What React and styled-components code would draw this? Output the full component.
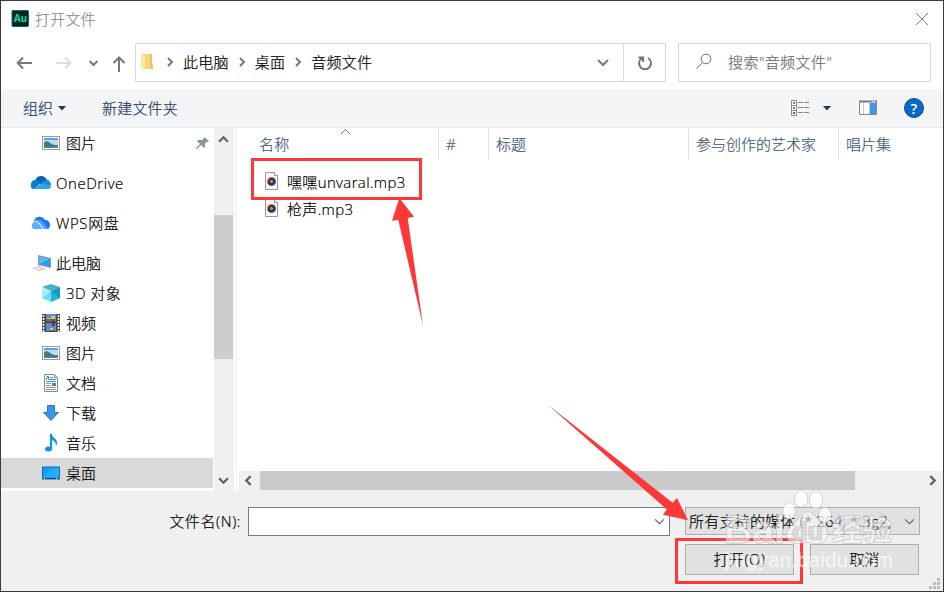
import React from "react";
import styled, { createGlobalStyle } from "styled-components";

const Global = createGlobalStyle`
  * { box-sizing: border-box; }
  body { margin: 0; background: #fff; }
  svg { display: block; flex: none; }
`;

const Window = styled.div`
  position: relative;
  width: 944px;
  height: 592px;
  display: flex;
  flex-direction: column;
  overflow: hidden;
  border: 1px solid #3a3a3c;
  background: #fff;
  color: #000;
  font-family: "Open Sans", "Noto Sans CJK SC", sans-serif;
  font-size: 15px;
  font-weight: 300;
  line-height: 20px;
  white-space: nowrap;
  -webkit-text-stroke: 0.2px;
`;

const Label = styled.span`
  display: block;
  flex: none;
  letter-spacing: ${(p) => p.$spacing || 0}px;
`;

const TitleBar = styled.header`
  height: 42px;
  padding: 9px 14px 0 10px;
  display: flex;
  align-items: flex-start;
  color: #8c8c8c;
`;

const TitleText = styled(Label)`
  margin: -1px auto 0 6px;
`;

const CloseIcon = styled.svg`
  margin-top: 2px;
`;

const NavBar = styled.nav`
  height: 39px;
  margin-bottom: 7px;
  display: flex;
`;

const NavButtons = styled.div`
  width: 134px;
  display: flex;
`;

const AddressBox = styled.div`
  width: 489px;
  display: flex;
  align-items: center;
  padding: 0 0 2px 4px;
  border: 1px solid #d9d9d9;
`;

const Crumbs = styled.div`
  display: flex;
  gap: 8px;
  margin-left: 7px;
`;

const Crumb = styled.span`
  display: flex;
  align-items: center;
  gap: 8px;
`;

const DropArrow = styled.svg`
  margin: 3px 14px 0 auto;
`;

const RefreshBox = styled.div`
  width: 42px;
  display: grid;
  place-items: center;
  border: 1px solid #d9d9d9;
  border-left: 0;
`;

const SearchBox = styled.div`
  width: 253px;
  margin-left: 12px;
  padding: 0 0 2px 16px;
  display: flex;
  align-items: center;
  gap: 16px;
  border: 1px solid #d9d9d9;
  color: #6d6d6d;
`;

const Toolbar = styled.div`
  height: 39px;
  padding: 0 19px 0 22px;
  display: flex;
  align-items: center;
  background: #f4f5f7;
  border-bottom: 1px solid #e6e7e9;
  color: #1e395b;
`;

const ToolButton = styled.div`
  display: flex;
  align-items: center;
  gap: ${(p) => p.$gap || 5}px;
  margin-right: ${(p) => p.$after || 0}px;
`;

const Spacer = styled.div`
  flex: 1;
`;

const Body = styled.main`
  height: 363px;
  display: flex;
`;

const Sidebar = styled.aside`
  flex: none;
  width: 213px;
`;

const TreeRow = styled.div`
  width: 212px;
  height: 30px;
  display: flex;
  align-items: center;
  margin-bottom: ${(p) => p.$after || 0}px;
  padding-left: ${(p) => (p.$top ? 29 : 40)}px;
  gap: ${(p) => (p.$top ? 4 : 5)}px;
  background: ${(p) => (p.$selected ? "#d9d9d9" : "transparent")};
`;

const PinIcon = styled.svg`
  margin-left: auto;
  margin-right: 3px;
`;

const VScroll = styled.div`
  flex: none;
  width: 20px;
  display: flex;
  flex-direction: column;
  align-items: center;
  justify-content: space-between;
  background: #f0f0f0;
  padding: 6px 1px 5px 0;
`;

const VThumb = styled.div`
  width: 19px;
  height: 144px;
  margin-bottom: 47px;
  background: #cdcdcd;
`;

const Files = styled.section`
  flex: 1;
  min-width: 0;
  margin-left: 2px;
  border-left: 1px solid #f1f1f1;
  display: flex;
  flex-direction: column;
  background: #fff;
`;

const Columns = styled.div`
  height: 32px;
  display: flex;
  color: #43597a;
`;

const Column = styled.div`
  flex: none;
  width: ${(p) => p.$w}px;
  padding: 6px 0 0 7px;
  border-right: ${(p) => (p.$last ? "0" : "1px solid #e3e3e3")};
`;

const NameColumn = styled(Column)`
  display: flex;
  padding-left: 22px;
`;

const SortIcon = styled.svg`
  margin: -6px 0 0 50px;
`;

const FileList = styled.div`
  flex: 1;
  padding: 8px 0 0 27px;
`;

const FileRow = styled.div`
  height: 28px;
  margin-bottom: -1px;
  display: flex;
  align-items: center;
  gap: 7px;
`;

const HScroll = styled.div`
  height: 20px;
  margin-left: 2px;
  padding: 0 5px 1px 4px;
  display: flex;
  align-items: center;
  background: #f0f0f0;
`;

const HThumb = styled.div`
  width: 595px;
  height: 19px;
  margin: 0 auto 0 6px;
  background: #cacaca;
`;

const Footer = styled.footer`
  height: 100px;
  padding: 16px 23px 0 0;
  display: flex;
  flex-direction: column;
  gap: 8px;
  background: #f0f0f0;
`;

const FooterRow = styled.div`
  display: flex;
  justify-content: flex-end;
  align-items: flex-start;
`;

const FileLabel = styled(Label)`
  margin: 4px 7px 0 0;
`;

const FileInput = styled.div`
  width: 422px;
  height: 29px;
  margin-right: 15px;
  padding-right: 4px;
  display: flex;
  align-items: center;
  justify-content: flex-end;
  background: #fff;
  border: 1px solid #7a7a7a;
`;

const TypeSelect = styled.div`
  width: 235px;
  height: 28px;
  padding: 0 4px 0 3px;
  display: flex;
  align-items: center;
  justify-content: space-between;
  background: #e1e1e1;
  border: 1px solid #adadad;
`;

const DialogButtons = styled(FooterRow)`
  gap: 16px;
  padding-right: 1px;
`;

const DialogButton = styled.div`
  width: 109px;
  height: 31px;
  padding-bottom: 1px;
  display: grid;
  place-items: center;
  background: #e1e1e1;
  border: 1px solid #adadad;
`;

const Highlight = styled.div`
  position: absolute;
  left: ${(p) => p.$x}px;
  top: ${(p) => p.$y}px;
  width: ${(p) => p.$w}px;
  height: ${(p) => p.$h}px;
  border: 3px solid #fd3838;
`;

const Overlay = styled.svg`
  position: absolute;
  left: -1px;
  top: -1px;
  pointer-events: none;
`;

const Grip = styled.svg`
  position: absolute;
  right: 3px;
  bottom: 2px;
`;

const AuIcon = () => (
  <svg width="18" height="17" viewBox="0 0 18 17">
    <rect x="1" y=".5" width="16.500" height="16" rx="1" fill="#00241f" stroke="#0f6b5a" />
    <text x="3" y="12" fontFamily="Open Sans" fontWeight="700" fontSize="10.5" textLength="13" lengthAdjust="spacingAndGlyphs" fill="#00dfae">Au</text>
  </svg>
);

const Chevron = ({ dir = "down", size = 10, color = "#606060", weight = 2 }) => {
  const turn = { down: 0, left: 90, up: 180, right: 270 }[dir];
  return (
    <svg width={size} height={size} viewBox="0 0 10 10">
      <path d="M1 3 5 7 9 3" transform={`rotate(${turn} 5 5)`} fill="none" stroke={color} strokeWidth={weight} />
    </svg>
  );
};

const FolderIcon = () => (
  <svg width="18" height="18" viewBox="0 0 18 18">
    <path d="M2 1h10v15H3z" fill="#f6d77b" />
    <path d="M10 1h2v10l1 1v4h-3z" fill="#efc65d" />
    <path d="M1 1l4 2v14l-4-2z" fill="#ffe7a2" />
  </svg>
);

const PictureIcon = () => (
  <svg width="20" height="18" viewBox="0 0 20 18">
    <rect x="1.5" y="2.5" width="17" height="13" fill="#fff" stroke="#9b9b9b" />
    <rect x="3" y="4" width="14" height="10" fill="#b9dcf7" />
    <path d="M3 4h14v2H3z" fill="#5ba0e6" />
    <path d="M3 8c2-1 4-1 6 1l4 2h4v3H3z" fill="#467a75" />
    <path d="M6 12.500h11V14H3z" fill="#4a86b8" />
  </svg>
);

const OneDriveIcon = () => (
  <svg width="22" height="18" viewBox="0 0 22 18">
    <path d="M5 7C6 3 9 2 11 2c3 0 5 2 6 4l-5 5z" fill="#0364b8" />
    <path d="M5 6c2 0 4 1 6 3l-7 6c-2 0-4-2-3-5 0-2 2-4 4-4z" fill="#0f79d3" />
    <path d="M11 9c2-2 4-3 6-3 2 0 4 2 4 5l-5 2z" fill="#1490df" />
    <path d="M3 14.500 12 9.500l9 2c0 2-1 3.500-3 3.500H5z" fill="#28a8ea" />
  </svg>
);

const WpsIcon = () => (
  <svg width="22" height="18" viewBox="0 0 22 18">
    <path d="M4 7c1-5 8-6 11-1 3 0 5 2 5 5 0 2-1 4-3 4h-4L7 7z" fill="#1a78f2" />
    <path d="M5 6c5-1 7 1 9 4l4 5h-5L9 9 4 8z" fill="#4ea2fb" />
    <path d="M2 11c0-3 5-5 7-1l4 5H5c-2 0-4-2-3-4z" fill="#5cadff" />
    <path d="M5 7.500c4 0 6 4 8.500 8" fill="none" stroke="#fff" />
  </svg>
);

const ComputerIcon = () => (
  <svg width="22" height="20" viewBox="0 0 22 20">
    <path d="M8 2 21 5v10L8 12z" fill="#8b979f" />
    <path d="M9 3.300 20 6v7.500L9 11z" fill="#2e9bea" />
    <path d="M9 3.300 20 6 9 11z" fill="#5ab8f7" />
    <path d="M2 15l7-2 7 3-7 2z" fill="#bcc3c8" />
    <path d="m3 15 6-1 5 2-6 1z" fill="#e4e8ea" />
  </svg>
);

const CubeIcon = () => (
  <svg width="20" height="20" viewBox="0 0 20 20">
    <path d="m10 1 9 3-9 4-9-4z" fill="#4cb0c6" />
    <path d="m1 4 9 4v11l-9-4z" fill="#a8f1f2" />
    <path d="m19 4-9 4v11l9-4z" fill="#129cc5" />
    <path d="m10 8 9 7-9 4zM1 15l9-7v11z" fill="#35cbdc" opacity=".5" />
  </svg>
);

const VideoIcon = () => (
  <svg width="20" height="20" viewBox="0 0 20 20">
    <path d="M1 1h18v18H1z" fill="#484848" />
    <path d="M5 1h10v8H5zM5 10h10v8H5z" fill="#548fda" />
    <path d="M2.500 2v17M17.500 2v17" stroke="#fff" strokeWidth="1.600" strokeDasharray="2 1" />
    <path d="M5 6h4v2H5zM9 16h4v2H9z" fill="#e03c32" />
    <path d="M10 3h4v3h-4zM9 15h3v2H9zM6 5h3v1H6z" fill="#f1c33c" />
    <path d="M10 6h4v3h-4z" fill="#35753d" />
    <path d="M11 10h3v3h-3z" fill="#a02a25" />
    <path d="M5 9h10" stroke="#303030" />
  </svg>
);

const DocumentIcon = () => (
  <svg width="20" height="20" viewBox="0 0 20 20">
    <path d="M3.500 1.500h10l3 3v14h-13z" fill="#fff" stroke="#8b8b8b" />
    <path d="M13.500 1.500v3h3" fill="#ddd" stroke="#8b8b8b" />
    <path d="M9 4.500h3M8 6.500h7M5 8.500h10" stroke="#299bd8" />
    <path d="m5 7 2-4 1 4" fill="none" stroke="#1c78b5" />
    <path d="M5 10.500h5M5 12.500h5M5 14.500h10M5 16.500h10" stroke="#999" />
    <path d="M11 10h4v3h-4z" fill="#4689b7" />
  </svg>
);

const DownloadIcon = () => (
  <svg width="20" height="20" viewBox="0 0 20 20">
    <path d="M6.500 2.500h7v7h4L10 17.500 2.500 9.500h4z" fill="#3894e5" stroke="#2678c4" />
  </svg>
);

const MusicIcon = () => (
  <svg width="20" height="20" viewBox="0 0 20 20">
    <ellipse cx="7.500" cy="16" rx="3.500" ry="2.500" fill="#0795ed" />
    <path d="M9 1h2c0 4 5 4 5 9 0 2-1 3-1 3 0-4-2-5-4-6v9H9z" fill="#0795ed" />
  </svg>
);

const DesktopIcon = () => (
  <svg width="20" height="18" viewBox="0 0 20 18">
    <rect x="1.500" y="3" width="17" height="12" fill="#139dfc" stroke="#0872bc" />
    <path d="M11 4h7v9H3z" fill="#29acff" />
    <path d="M2 14.500h16" stroke="#064f86" />
    <path d="M3 14.500h2M15 14.500h2" stroke="#fff" strokeDasharray="1 1" />
  </svg>
);

const AudioFileIcon = () => (
  <svg width="16" height="20" viewBox="0 0 16 20">
    <path d="M1.500 .500h9l3 3v14h-12z" fill="#f8f8fa" stroke="#989898" />
    <path d="M10.500 .500v3h3" fill="#fff" stroke="#989898" />
    <circle cx="7.500" cy="9.500" r="4.300" fill="#302c38" />
    <path d="M3.500 10a4 4 0 0 1 4-4.500 4 4 0 0 1 3 1" fill="none" stroke="#f0843c" strokeWidth="1.200" />
    <path d="M11.500 9a4 4 0 0 1-6 4" fill="none" stroke="#8c55c5" strokeWidth="1" />
    <circle cx="7.500" cy="9.500" r="1.200" fill="#fff" />
    <circle cx="7.500" cy="9.500" r=".5" fill="#302c38" />
  </svg>
);

const tree = [
  { name: "图片", Icon: PictureIcon, after: 10, pinned: true },
  { name: "OneDrive", Icon: OneDriveIcon, top: true, after: 10, spacing: 0.55 },
  { name: "WPS网盘", Icon: WpsIcon, top: true, after: 10, spacing: 0.6 },
  { name: "此电脑", Icon: ComputerIcon, top: true },
  { name: "3D 对象", Icon: CubeIcon, spacing: 0.4 },
  { name: "视频", Icon: VideoIcon },
  { name: "图片", Icon: PictureIcon },
  { name: "文档", Icon: DocumentIcon },
  { name: "下载", Icon: DownloadIcon },
  { name: "音乐", Icon: MusicIcon },
  { name: "桌面", Icon: DesktopIcon, selected: true },
];

const files = ["嘿嘿unvaral.mp3", "枪声.mp3"];

const Navigation = () => (
  <NavBar>
    <NavButtons>
      <svg width="134" height="39" viewBox="0 0 134 39" fill="none" strokeWidth="2">
        <path d="M31 20H17M22 14.500 16.700 20l5.300 5.500" stroke="#777" />
        <path d="M55 20h14M64 14.500l5.300 5.500-5.300 5.500" stroke="#dcdcdc" />
        <path d="m88.500 18 4 4 4-4" stroke="#777" />
        <path d="M118 29V15M112.500 20l5.500-5.500 5.500 5.500" stroke="#777" />
      </svg>
    </NavButtons>
    <AddressBox>
      <FolderIcon />
      <Crumbs>
        {["此电脑", "桌面", "音频文件"].map((name) => (
          <Crumb key={name}>
            <Chevron dir="right" color="#777" />
            <Label $spacing={0.25}>{name}</Label>
          </Crumb>
        ))}
      </Crumbs>
      <DropArrow width="12" height="10" viewBox="0 0 12 10">
        <path d="m1 2 5 5 5-5" fill="none" stroke="#777" strokeWidth="2" />
      </DropArrow>
    </AddressBox>
    <RefreshBox>
      <svg width="18" height="18" viewBox="0 0 18 18">
        <path d="M12 4a6 6 0 1 1-6 0M2.500 3.500h4.500V8" fill="none" stroke="#777" strokeWidth="2" />
      </svg>
    </RefreshBox>
    <SearchBox>
      <svg width="17" height="17" viewBox="0 0 17 17">
        <circle cx="11" cy="6" r="4.800" fill="none" stroke="#6d6d6d" />
        <path d="m7.500 9.500-6 6" stroke="#6d6d6d" />
      </svg>
      <Label $spacing={0.45}>搜索"音频文件"</Label>
    </SearchBox>
  </NavBar>
);

const Commands = () => (
  <Toolbar>
    <ToolButton $after={36}>
      <Label>组织</Label>
      <svg width="8" height="5"><path d="M0 0h8L4 4.500z" fill="#1e395b" /></svg>
    </ToolButton>
    <Label $spacing={0.2}>新建文件夹</Label>
    <Spacer />
    <ToolButton $after={28} $gap={13}>
      <svg width="20" height="18" viewBox="0 0 20 18">
        <path d="M1.500 1.500h5v15h-5zM1.500 6.500h5M1.500 11.500h5" fill="#fff" stroke="#8b8b8b" />
        <path d="M3 3h2v2H3z" fill="#448bc0" />
        <path d="M3 8h2v2H3z" fill="#75853c" />
        <path d="M3 13h2v2H3z" fill="#c24932" />
        <path d="M8 3.500h11M8 8.500h11M8 13.500h11" stroke="#858585" strokeDasharray="5 1" />
      </svg>
      <svg width="8" height="5"><path d="M0 0h8L4 4.500z" fill="#1e395b" /></svg>
    </ToolButton>
    <ToolButton $after={26}>
      <svg width="19" height="16" viewBox="0 0 19 16">
        <path d="M.500 1.500h17v13H.500z" fill="#fff" stroke="#85888d" />
        <path d="M0 1.500h18" stroke="#777b80" strokeWidth="2" />
        <path d="M11 3h6v11h-6z" fill="#3d98e8" />
        <path d="M4.500 3v11M10.500 3v11" stroke="#c8c8c8" />
        <path d="M13 1.500h4" stroke="#fff" strokeDasharray="1 1" />
      </svg>
    </ToolButton>
    <svg width="20" height="20" viewBox="0 0 20 20">
      <circle cx="10" cy="10" r="9.500" fill="#0868c8" stroke="#064f9c" />
      <text x="10" y="15.500" textAnchor="middle" fill="#fff" fontFamily="Open Sans" fontWeight="600" fontSize="15">?</text>
    </svg>
  </Toolbar>
);

const Annotations = () => (
  <>
    <Highlight $x={250} $y={157} $w={171} $h={42} />
    <Highlight $x={674} $y={537} $w={128} $h={46} />
    <Overlay width="944" height="592" viewBox="0 0 944 592">
      <path d="M399.300 198 414 216.700 407.700 218 423 325.500 398.300 220 392 220.700z" fill="#fd3838" />
      <path d="M688 520.300 677 498 672.700 502.700 547.500 404.500 666.700 509.300 663 514.700z" fill="#fd3838" />
      <g fill="#fff" fillOpacity=".55" stroke="#b4b4b4" strokeOpacity=".7" strokeWidth="1.200" paintOrder="stroke">
        <text x="724" y="543" fontFamily="Liberation Sans" fontWeight="700" fontSize="39" textLength="61" lengthAdjust="spacingAndGlyphs">Bai</text>
        <g fillOpacity=".8">
          <ellipse cx="789" cy="511" rx="6" ry="8" />
          <ellipse cx="801" cy="499" rx="6.500" ry="8" />
          <ellipse cx="816" cy="500" rx="6.500" ry="8" />
          <ellipse cx="825" cy="515" rx="6" ry="7.500" />
        </g>
        <path d="M808 512c6 0 8 7 13 11 6 5 8 10 5 16-2 5-8 5-13 4-4-1-8-1-12 0-7 1-13-1-14-7-1-7 4-10 9-15 4-4 6-9 12-9z" />
        <text x="792" y="540" fontFamily="Liberation Sans" fontWeight="700" fontSize="24" textLength="31" lengthAdjust="spacingAndGlyphs" fill="#dadada" fillOpacity=".9">du</text>
        <text x="832" y="540" fontFamily="Noto Sans CJK SC" fontWeight="700" fontSize="30">经验</text>
      </g>
      <text x="725" y="567" fontFamily="Liberation Sans" fontWeight="400" fontSize="20" textLength="168" fill="#fff" fillOpacity=".6" stroke="#fff" strokeOpacity=".3" strokeWidth=".8">jingyan.baidu.com</text>
    </Overlay>
  </>
);

export default function App() {
  return (
    <Window>
      <Global />
      <TitleBar>
        <AuIcon />
        <TitleText $spacing={0.2}>打开文件</TitleText>
        <CloseIcon width="14" height="14" viewBox="0 0 14 14">
          <path d="m1 1 12 12M13 1 1 13" stroke="#808080" />
        </CloseIcon>
      </TitleBar>
      <Navigation />
      <Commands />
      <Body>
        <Sidebar>
          {tree.map(({ name, Icon, top, after, selected, pinned, spacing }, i) => (
            <TreeRow key={i} $top={top} $after={after} $selected={selected}>
              <Icon />
              <Label $spacing={spacing}>{name}</Label>
              {pinned && (
                <PinIcon width="14" height="14" viewBox="0 0 14 14">
                  <path d="m8 1 5 4-1 1-1-.3-2 2v3L8 12 5 9l-4 4-1 0 0-1 4-4-3-3 1-1h4l2-2z" fill="#8a979f" />
                </PinIcon>
              )}
            </TreeRow>
          ))}
        </Sidebar>
        <VScroll>
          <Chevron dir="up" size={11} />
          <VThumb />
          <Chevron size={11} />
        </VScroll>
        <Files>
          <Columns>
            <NameColumn $w={202}>
              <Label $spacing={0.3}>名称</Label>
              <SortIcon width="11" height="7" viewBox="0 0 11 7">
                <path d="m1 6 4.500-4.500L10 6" fill="none" stroke="#777" />
              </SortIcon>
            </NameColumn>
            <Column $w={50}>#</Column>
            <Column $w={200}>标题</Column>
            <Column $w={150}>参与创作的艺术家</Column>
            <Column $w={104} $last>唱片集</Column>
          </Columns>
          <FileList>
            {files.map((name) => (
              <FileRow key={name}>
                <AudioFileIcon />
                <Label $spacing={0.35}>{name}</Label>
              </FileRow>
            ))}
          </FileList>
          <HScroll>
            <Chevron dir="left" size={11} />
            <HThumb />
            <Chevron dir="right" size={11} />
          </HScroll>
        </Files>
      </Body>
      <Footer>
        <FooterRow>
          <FileLabel $spacing={0.6}>文件名(N):</FileLabel>
          <FileInput>
            <Chevron size={11} weight={1} />
          </FileInput>
          <TypeSelect>
            <Label $spacing={0.22}>所有支持的媒体 (*.264, *.3g2,</Label>
            <Chevron size={11} weight={1} />
          </TypeSelect>
        </FooterRow>
        <DialogButtons>
          <DialogButton>
            <Label $spacing={0.5}>打开(O)</Label>
          </DialogButton>
          <DialogButton>取消</DialogButton>
        </DialogButtons>
      </Footer>
      <Annotations />
      <Grip width="11" height="11" viewBox="0 0 11 11">
        <path d="M8 0h3v3H8zM4 4h3v3H4zM8 4h3v3H8zM0 8h3v3H0zM4 8h3v3H4zM8 8h3v3H8z" fill="#bdbdbd" />
      </Grip>
    </Window>
  );
}
